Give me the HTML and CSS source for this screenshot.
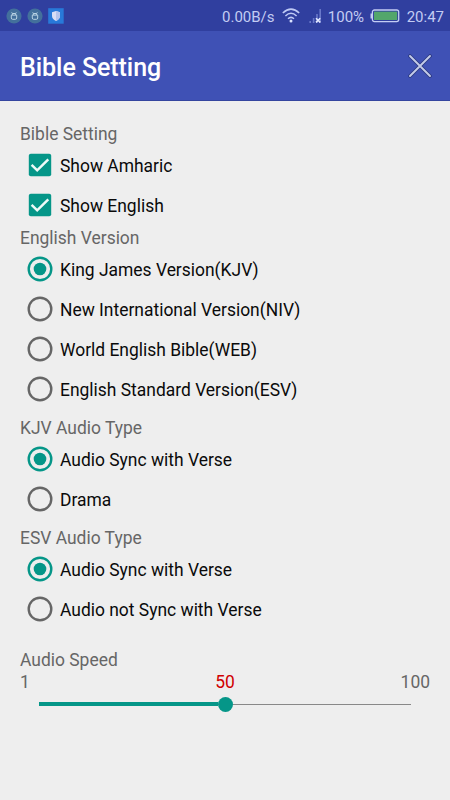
FILE: index.html
```html
<!DOCTYPE html>
<html lang="en">
<head>
<meta charset="utf-8">
<title>Bible Setting</title>
<link rel="stylesheet" href="styles.css">
</head>
<body>
<svg class="defs" width="0" height="0" aria-hidden="true">
  <symbol id="check" viewBox="0 0 24 24"><rect x=".8" y=".8" width="22.4" height="22.4" rx="2" fill="#059688"/><path d="M3.600 11.800 9.200 17.300 20.300 6.300" fill="none" stroke="#eefaf8" stroke-width="2.500"/></symbol>
  <symbol id="on" viewBox="0 0 26 26"><circle cx="13" cy="13" r="11.3" fill="none" stroke="#059688" stroke-width="2.4"/><circle cx="13" cy="13" r="6.3" fill="#059688"/></symbol>
  <symbol id="off" viewBox="0 0 26 26"><circle cx="13" cy="13" r="11.3" fill="none" stroke="#666" stroke-width="2.4"/></symbol>
  <symbol id="bot" viewBox="0 0 16 16"><circle cx="8" cy="8" r="7.6" fill="#43709c"/><path d="M5.300 7.100h5.400v2.900q0 1.300-1.300 1.300H6.600q-1.300 0-1.300-1.300zM6.300 7V5.500h3.400V7M5.700 4.400l.8 1M10.300 4.400l-.8 1" fill="none" stroke="#b9d4e4" stroke-width="1"/></symbol>
</svg>
<div class="status">
  <div class="notices">
    <svg width="16" height="16"><use href="#bot"/></svg>
    <svg width="16" height="16"><use href="#bot"/></svg>
    <svg width="16" height="16" viewBox="0 0 16 16"><rect width="15.5" height="15.5" x=".2" y=".2" fill="#2879d9"/><path d="M8 3 12 4.300V8q0 3.200-4 5Q4 11.200 4 8V4.300z" fill="#d9def5"/><path d="M8 3 12 4.300V8q0 3.200-4 5z" fill="#b5c4ed"/></svg>
  </div>
  <span class="rate">0.00B/s</span>
  <svg class="wifi" width="18" height="15" viewBox="0 0 18 15"><g fill="none" stroke="#bfcaf5" stroke-width="1.500"><path d="M.8 5Q9-2.800 17.200 5"/><path d="M3.400 8Q9 2.600 14.600 8"/><path d="M6 10.700Q9 8 12 10.700"/></g><circle cx="9" cy="13" r="1.500" fill="#dce3ff"/></svg>
  <svg class="signal" width="13" height="16" viewBox="0 0 13 16"><path d="M1.200 15v-2M4.600 15v-5M8 15V6M11.200 15V1" stroke="#6978c9" stroke-width="1.600"/><path d="m7 10.200 4.200 4.200m0-4.200L7 14.400" stroke="#e2e7ff" stroke-width="1.600"/></svg>
  <span class="percent">100%</span>
  <svg class="battery" width="30" height="14" viewBox="0 0 30 14"><path d="M1.300 4.500v5" stroke="#c4cdf4" stroke-width="1.600"/><rect x="2.400" y="1" width="26.300" height="11.600" rx="2" fill="#303f9f" stroke="#c4cdf4" stroke-width="1.300"/><rect x="4" y="2.600" width="23.200" height="8.400" fill="#53a66b"/></svg>
  <span class="time">20:47</span>
</div>
<header class="bar">
  <h1>Bible Setting</h1>
  <svg width="24" height="24" viewBox="0 0 24 24"><g fill="none" stroke-linecap="round"><path d="m2 2 20 20M22 2 2 22" stroke="#2b397f" stroke-width="3.600"/><path d="m2 2 20 20M22 2 2 22" stroke="#c4cbe9" stroke-width="1.900"/></g></svg>
</header>
<main>
  <section>
    <h2>Bible Setting</h2>
    <div class="row"><svg><use href="#check" x="1" y="1" width="24" height="24"/></svg><span>Show Amharic</span></div>
    <div class="row"><svg><use href="#check" x="1" y="1" width="24" height="24"/></svg><span>Show English</span></div>
  </section>
  <section>
    <h2>English Version</h2>
    <div class="row"><svg><use href="#on"/></svg><span>King James Version(KJV)</span></div>
    <div class="row"><svg><use href="#off"/></svg><span>New International Version(NIV)</span></div>
    <div class="row"><svg><use href="#off"/></svg><span>World English Bible(WEB)</span></div>
    <div class="row"><svg><use href="#off"/></svg><span>English Standard Version(ESV)</span></div>
  </section>
  <section class="audio">
    <h2>KJV Audio Type</h2>
    <div class="row"><svg><use href="#on"/></svg><span>Audio Sync with Verse</span></div>
    <div class="row"><svg><use href="#off"/></svg><span>Drama</span></div>
  </section>
  <section class="audio">
    <h2>ESV Audio Type</h2>
    <div class="row"><svg><use href="#on"/></svg><span>Audio Sync with Verse</span></div>
    <div class="row"><svg><use href="#off"/></svg><span>Audio not Sync with Verse</span></div>
  </section>
  <section class="speed">
    <h2>Audio Speed</h2>
    <div class="scale"><span>1</span><span class="value">50</span><span>100</span></div>
    <div class="slider"><i class="fill"></i><i class="thumb"></i><i class="rest"></i></div>
  </section>
</main>
</body>
</html>
```
FILE: styles.css
```css
* { box-sizing: border-box; }
body { margin: 0; width: 450px; height: 800px; overflow: hidden; background: #eee; font-family: Roboto, sans-serif; font-size: 17.45px; color: #0a0a0a; }
.defs { position: absolute; }
svg { display: block; flex: none; }
.status { display: flex; align-items: center; height: 31px; padding: 0 6px; background: #303f9f; color: #c3ccf3; font-size: 15px; line-height: 30px; white-space: nowrap; }
.status span { padding-top: 2px; }
.notices { display: flex; gap: 5px; width: 216px; flex: none; }
.rate { width: 60px; }
.wifi { margin-right: 9px; }
.signal { margin-right: 6px; }
.percent { width: 42px; }
.battery { margin-right: 7px; }
.bar { display: flex; align-items: center; justify-content: space-between; height: 70px; padding: 1px 18px 0 20px; background: #3f51b5; border-bottom: 1px solid #34459f; }
h1 { margin: 0; padding-top: 3px; color: #fff; font-size: 25px; font-weight: 500; line-height: 30px; letter-spacing: -0.05px; }
main { padding: 20px 20px 0; }
h2 { margin: 0; height: 24px; padding-top: 1px; font-size: 17.45px; font-weight: 400; line-height: 25px; color: #666; }
.row { display: flex; align-items: center; gap: 7px; height: 40px; padding-left: 7px; }
.row svg { width: 26px; height: 26px; }
.row span { line-height: 24px; padding-top: 1px; }
.audio h2 { height: 30px; padding-top: 7px; }
.speed { padding-top: 18px; }
.speed h2 { height: 23px; }
.scale { display: grid; grid-template-columns: 1fr 1fr 1fr; line-height: 25px; height: 24px; color: #666; }
.scale span:last-child { text-align: right; }
.scale .value { color: #d00000; text-align: center; }
.slider { display: flex; align-items: center; height: 16px; margin: 2px 19px 0; }
.fill { width: 179px; height: 4px; background: #059688; }
.thumb { width: 15px; height: 15px; border-radius: 50%; background: #059688; }
.rest { flex: 1; height: 1px; background: #888; }
```
